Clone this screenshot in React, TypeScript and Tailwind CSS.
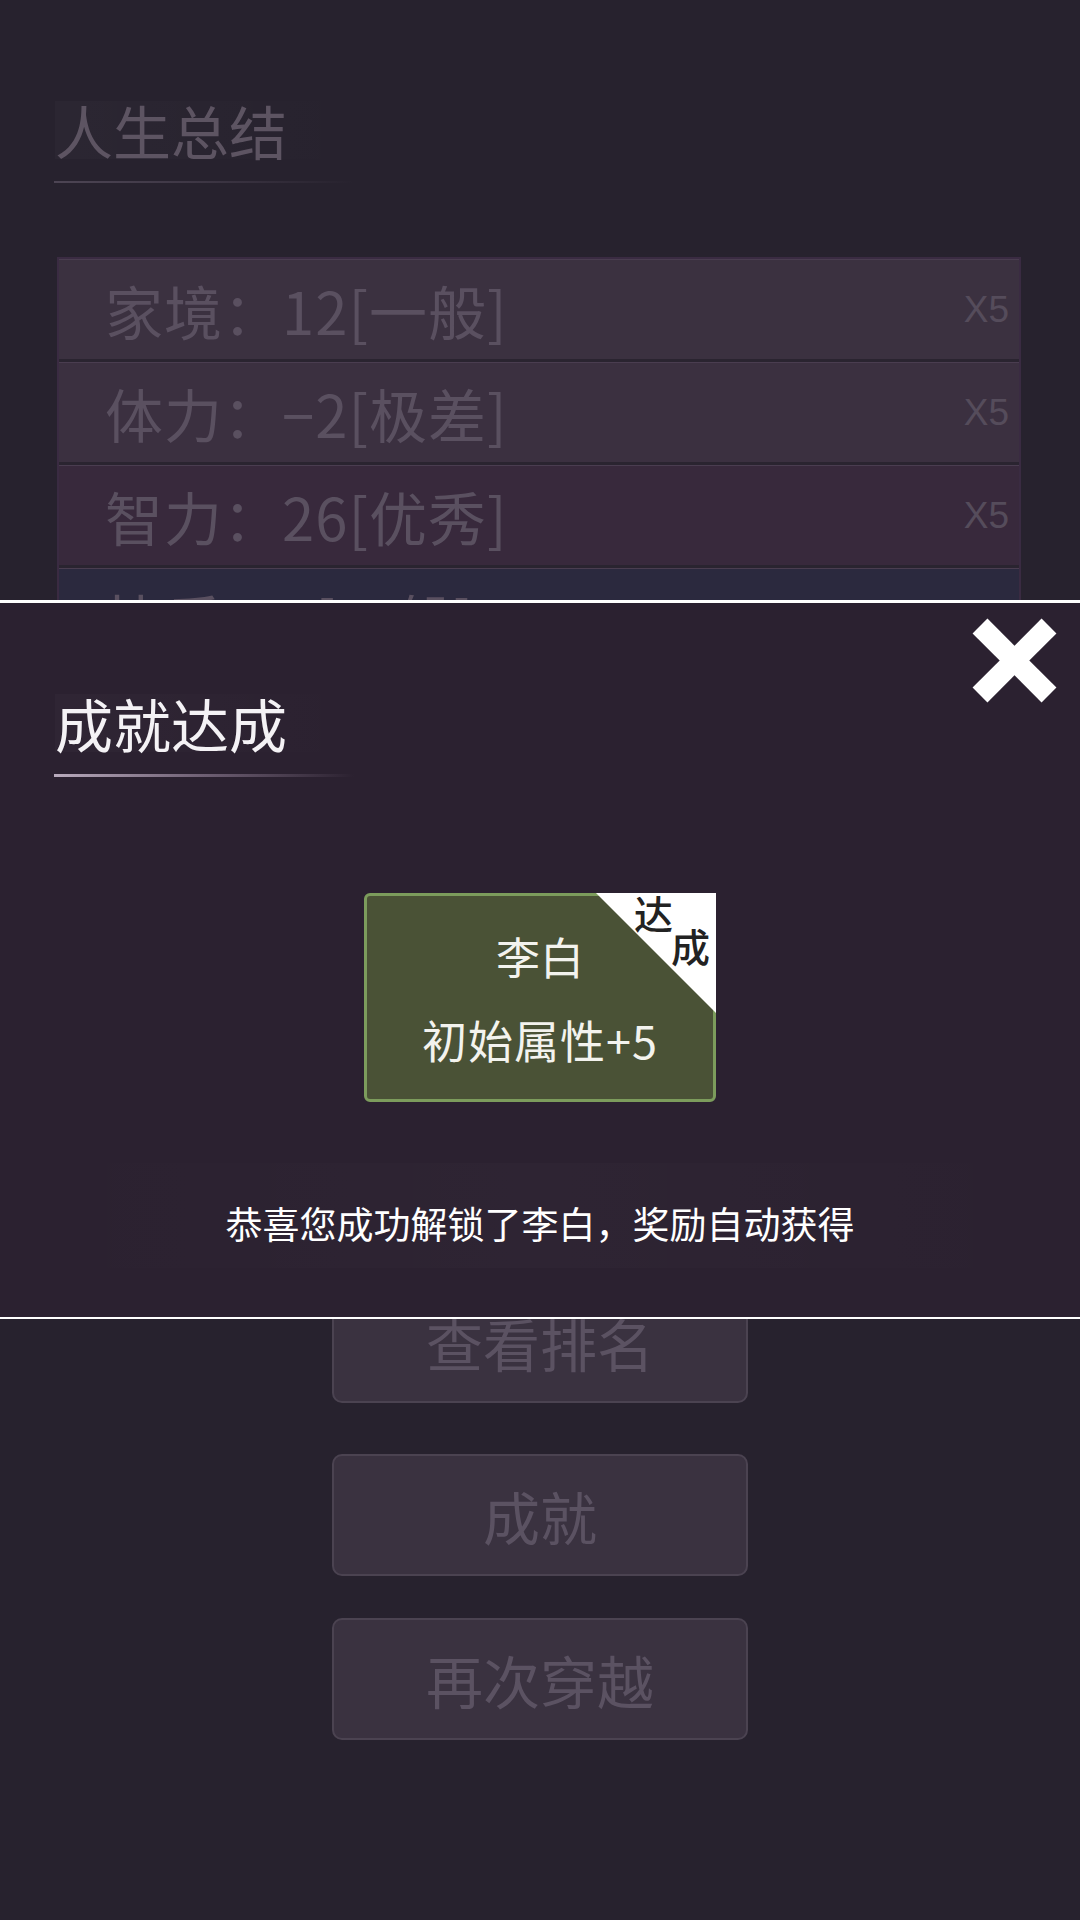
const rows = [
  { label: '家境：12[一般]', bg: 'bg-[#3b3140]' },
  { label: '体力：−2[极差]', bg: 'bg-[#3b3040]' },
  { label: '智力：26[优秀]', bg: 'bg-[#38293c]' },
  { label: '快乐：5[一般]', bg: 'bg-[#2b293e]' },
  { label: '颜值：3[一般]', bg: 'bg-[#3b3140]' },
  { label: '享年：78[一般]', bg: 'bg-[#3b3140]' },
  { label: '总评：136[优秀]', bg: 'bg-[#3b3140]' },
]

const buttons = [
  { text: '查看排名', gap: '' },
  { text: '成就', gap: 'mt-[51px]' },
  { text: '再次穿越', gap: 'mt-[42px]' },
]

export default function App() {
  return (
    <div className="relative w-[1080px] h-[1920px] overflow-hidden bg-[#27222e] font-['Noto_Sans_CJK_SC',sans-serif]">
      {/* Summary page underneath */}
      <div className="pt-[101px]">
        <div className="ml-[55px] w-[300px] bg-gradient-to-r from-white/[0.02] to-transparent">
          <h1 className="text-[58px] leading-[58px] text-[#5d5462]">人生总结</h1>
        </div>
        <div className="mt-[22px] ml-[54px] h-[2px] w-[300px] bg-gradient-to-r from-[#4d4554] via-[#3d3644] to-transparent" />

        <div className="mt-[74px] ml-[57px] w-[964px] flex flex-col gap-[3px] border-2 border-[#3a2b42] bg-[#2a2430]">
          {rows.map((r) => (
            <div
              key={r.label}
              className={`${r.bg} h-[100px] flex items-center justify-between pl-[46px] pr-[10px] border-t border-[#4a3d50]`}
            >
              <span className="text-[58px] leading-none tracking-[1px] text-[#5a5060]">{r.label}</span>
              <span className="text-[37px] leading-none text-[#554c5b] font-['Liberation_Sans',sans-serif]">X5</span>
            </div>
          ))}
        </div>

        <div className="mt-[302px] flex flex-col items-center">
          {buttons.map((b) => (
            <div
              key={b.text}
              className={`${b.gap} w-[416px] h-[122px] flex items-center justify-center rounded-[10px] border-2 border-[#4b4351] bg-[#3a3240]`}
            >
              <span className="text-[57px] leading-none text-[#5b5262]">{b.text}</span>
            </div>
          ))}
        </div>
      </div>

      {/* Achievement modal */}
      <div className="absolute left-0 right-0 top-[600px] h-[719px] border-t-[3px] border-b-2 border-white bg-[#2b2130]">
        <svg className="absolute top-[15px] right-[23px]" width="85" height="85" viewBox="0 0 85 85">
          <line x1="8" y1="8" x2="77" y2="77" stroke="white" strokeWidth="21" />
          <line x1="77" y1="8" x2="8" y2="77" stroke="white" strokeWidth="21" />
        </svg>

        <div className="pt-[91px]">
          <div className="ml-[55px] w-[300px] bg-gradient-to-r from-white/[0.02] to-transparent">
            <h2 className="text-[58px] leading-[58px] text-[#f4f2f5]">成就达成</h2>
          </div>
          <div className="mt-[22px] ml-[54px] h-[3px] w-[300px] bg-gradient-to-r from-[#b9abbd] via-[#6e5f73] to-transparent" />

          <div className="relative mx-auto mt-[116px] w-[352px] h-[209px] rounded-[6px] border-[3px] border-[#7c9c5c] bg-[#4a5236] flex flex-col items-center">
            <div className="mt-[38px] text-[44px] leading-[44px] text-[#f3f3ee]">李白</div>
            <div className="mt-[40px] text-[45px] leading-[44px] tracking-[1px] text-[#f3f3ee]">初始属性+5</div>

            <div className="absolute -top-[3px] -right-[3px] w-[120px] h-[120px] bg-white [clip-path:polygon(0_0,100%_0,100%_100%)]">
              <span className="absolute left-[38px] top-0 text-[39px] leading-[39px] font-medium text-[#222]">达</span>
              <span className="absolute left-[75px] top-[33px] text-[39px] leading-[39px] font-medium text-[#222]">成</span>
            </div>
          </div>

          <div className="mx-[30px] mt-[61px] h-[105px] pt-[16px] flex items-center justify-center bg-gradient-to-r from-transparent via-white/[0.015] to-transparent">
            <p className="text-[37px] leading-none text-white">恭喜您成功解锁了李白，奖励自动获得</p>
          </div>
        </div>
      </div>
    </div>
  )
}
